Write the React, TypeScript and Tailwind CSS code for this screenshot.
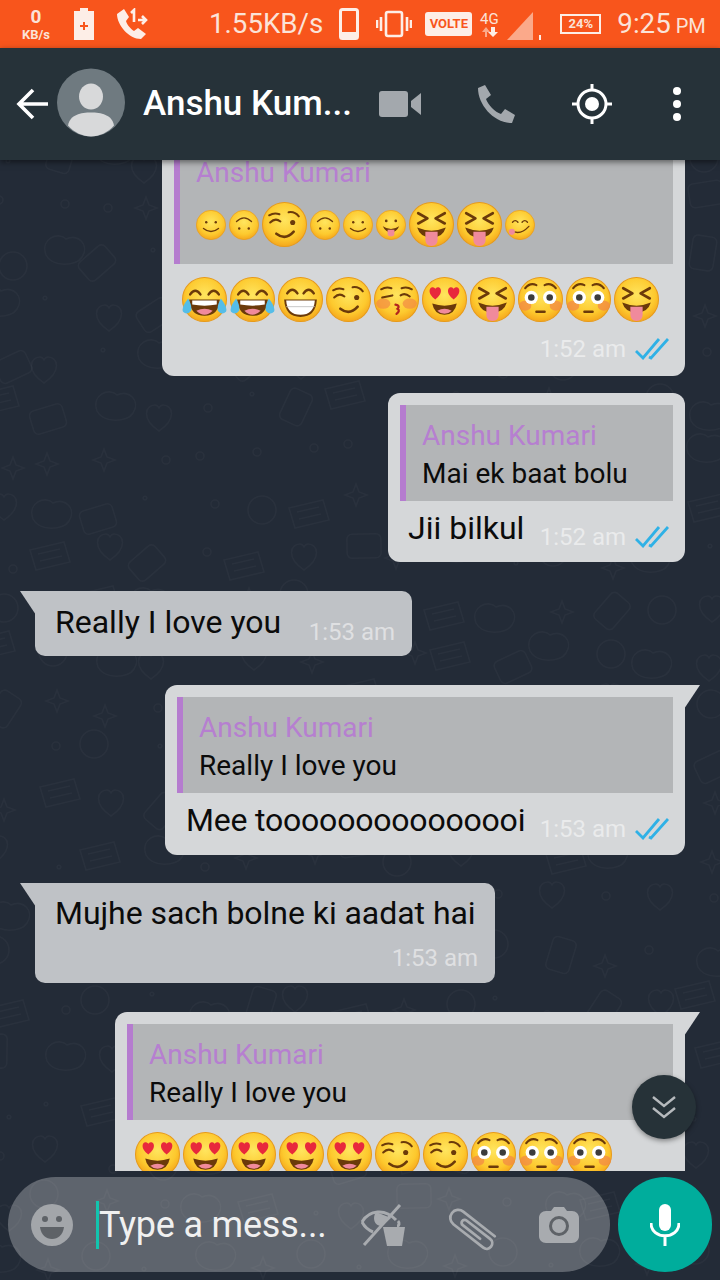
import type { ReactNode } from "react";

type Kind =
  | "smile"
  | "arch"
  | "wink"
  | "tongue"
  | "xd"
  | "yum"
  | "joy"
  | "grin"
  | "kiss"
  | "hearts"
  | "flushed";

const BROWN = "#6b3a0a";

function Heart({ x, y }: { x: number; y: number }) {
  return (
    <path
      transform={`translate(${x} ${y})`}
      d="M0 7C-8 1-6-5-2.500-5-1-5 0-4 0-3 0-4 1-5 2.500-5 6-5 8 1 0 7Z"
      fill="#e8283c"
    />
  );
}

function Face({ kind }: { kind: Kind }) {
  switch (kind) {
    case "smile":
      return (
        <g fill="none" stroke={BROWN} strokeWidth="2" strokeLinecap="round">
          <circle cx="15" cy="18" r="1.800" fill={BROWN} stroke="none" />
          <circle cx="29" cy="18" r="1.800" fill={BROWN} stroke="none" />
          <path d="M11 27Q22 36 33 27" />
        </g>
      );
    case "arch":
      return (
        <g fill="none" stroke={BROWN} strokeWidth="2" strokeLinecap="round">
          <path d="M11 17Q22 6 33 17" />
          <circle cx="15" cy="27" r="1.800" fill={BROWN} stroke="none" />
          <circle cx="29" cy="27" r="1.800" fill={BROWN} stroke="none" />
        </g>
      );
    case "wink":
      return (
        <g fill="none" stroke={BROWN} strokeWidth="2" strokeLinecap="round">
          <path d="M8 20Q13 15 18 19" />
          <path d="M26 10Q32 9 36 14" />
          <path d="M7 13Q12 10 17 12" />
          <circle cx="30" cy="20" r="2.500" fill={BROWN} stroke="none" />
          <path d="M14 31Q23 38 31 29" strokeWidth="2.500" />
        </g>
      );
    case "tongue":
      return (
        <g>
          <circle cx="15" cy="16" r="2" fill={BROWN} />
          <circle cx="29" cy="16" r="2" fill={BROWN} />
          <path d="M10 24Q22 32 34 24Q30 33 22 33Q14 33 10 24Z" fill={BROWN} />
          <path d="M17 29H27V35Q27 39 22 39Q17 39 17 35Z" fill="#f08a9c" />
        </g>
      );
    case "xd":
      return (
        <g>
          <path
            d="M9 11L18 16 9 21M35 11L26 16 35 21"
            fill="none"
            stroke={BROWN}
            strokeWidth="2.600"
            strokeLinecap="round"
            strokeLinejoin="round"
          />
          <path d="M8 25Q22 31 36 25Q33 35 22 35Q11 35 8 25Z" fill={BROWN} />
          <path d="M16 29H28V37Q28 43 22 43Q16 43 16 37Z" fill="#f08a9c" />
        </g>
      );
    case "yum":
      return (
        <g>
          <path
            d="M11 18Q15 13 19 18M25 18Q29 13 33 18"
            fill="none"
            stroke={BROWN}
            strokeWidth="2"
            strokeLinecap="round"
          />
          <path d="M9 30Q22 38 35 24" fill="none" stroke={BROWN} strokeWidth="2" strokeLinecap="round" />
          <circle cx="10" cy="32" r="4.500" fill="#f08a9c" />
        </g>
      );
    case "joy":
      return (
        <g>
          <path
            d="M8 17Q13 10 18 17M26 17Q31 10 36 17"
            fill="none"
            stroke={BROWN}
            strokeWidth="2.400"
            strokeLinecap="round"
          />
          <path d="M7 22H37Q36 38 22 38Q8 38 7 22Z" fill={BROWN} />
          <path d="M10 23H34V27Q22 29 10 27Z" fill="#fff" />
          <path d="M14 33Q22 29 30 33Q26 37 22 37Q18 37 14 33Z" fill="#f08a9c" />
          <path d="M6 21Q-1 30 1 34Q5 38 9 33Q10 28 6 21ZM38 21Q45 30 43 34Q39 38 35 33Q34 28 38 21Z" fill="#55bde8" />
        </g>
      );
    case "grin":
      return (
        <g>
          <path
            d="M9 16Q14 9 19 16M25 16Q30 9 35 16"
            fill="none"
            stroke={BROWN}
            strokeWidth="2.400"
            strokeLinecap="round"
          />
          <path d="M6 22H38Q37 39 22 39Q7 39 6 22Z" fill={BROWN} />
          <path d="M8 23H36Q35 37 22 37Q9 37 8 23Z" fill="#fff" />
          <path d="M8 29H36" stroke="#bbb" strokeWidth="0.800" />
        </g>
      );
    case "kiss":
      return (
        <g>
          <ellipse cx="9" cy="26" rx="7" ry="5" fill="#f28a45" opacity="0.7" />
          <ellipse cx="35" cy="26" rx="7" ry="5" fill="#f28a45" opacity="0.7" />
          <path
            d="M7 12Q12 9 17 11M27 11Q32 9 37 12M8 20L18 18M26 18Q30 15 35 19"
            fill="none"
            stroke={BROWN}
            strokeWidth="2"
            strokeLinecap="round"
          />
          <path d="M21 27Q26 28 23 31Q26 33 22 36" fill="none" stroke="#b3261e" strokeWidth="2.200" strokeLinecap="round" />
        </g>
      );
    case "hearts":
      return (
        <g>
          <Heart x={13} y={15} />
          <Heart x={31} y={15} />
          <path d="M10 26Q22 30 34 26Q32 37 22 37Q12 37 10 26Z" fill={BROWN} />
          <path d="M15 33Q22 29 29 33Q26 36 22 36Q18 36 15 33Z" fill="#f08a9c" />
        </g>
      );
    case "flushed":
      return (
        <g>
          <ellipse cx="7" cy="28" rx="6" ry="5" fill="#f28a45" opacity="0.75" />
          <ellipse cx="37" cy="28" rx="6" ry="5" fill="#f28a45" opacity="0.75" />
          <path d="M7 11Q12 5 18 8M26 8Q32 5 37 11" fill="none" stroke={BROWN} strokeWidth="2" strokeLinecap="round" />
          <circle cx="13" cy="20" r="6.500" fill="#fff" />
          <circle cx="31" cy="20" r="6.500" fill="#fff" />
          <circle cx="13" cy="20" r="3.200" fill="#3c3c3c" />
          <circle cx="31" cy="20" r="3.200" fill="#3c3c3c" />
          <path d="M18 34H26" stroke={BROWN} strokeWidth="2.400" strokeLinecap="round" />
        </g>
      );
  }
}

function Emoji({ kind, small }: { kind: Kind; small?: boolean }) {
  return (
    <svg viewBox="0 0 44 44" className={small ? "h-[30px] w-[30px] shrink-0" : "h-[45px] w-[45px] shrink-0"}>
      <circle cx="22" cy="22" r="21.500" fill="url(#emojiFace)" stroke="#e79a1a" strokeWidth="1" />
      <Face kind={kind} />
    </svg>
  );
}

function Ticks() {
  return (
    <svg viewBox="0 0 34 22" className="h-[22px] w-[34px]" fill="none" stroke="#2fb1e6" strokeWidth="2.800">
      <path d="M1 13L8 20 24 1" />
      <path d="M14 19L16 20 33 1" />
    </svg>
  );
}

function Reply({ children, text }: { children?: ReactNode; text?: string }) {
  return (
    <div className="flex h-[96px] flex-col border-l-[6px] border-[#b57ccf] bg-[#b3b5b7] pl-[16px] pt-[13px]">
      <div className="text-[28px] leading-[36px] text-[#b67fd0]">Anshu Kumari</div>
      {text && <div className="text-[28px] leading-[40px] text-[#0b0b0b]">{text}</div>}
      {children}
    </div>
  );
}

function Time({ value, ticks }: { value: string; ticks?: boolean }) {
  return (
    <div className="flex items-center gap-[9px] text-[24px] leading-[28px] text-white/50">
      <span>{value}</span>
      {ticks && <Ticks />}
    </div>
  );
}

function OutTail() {
  return <div className="absolute right-[-15px] top-0 h-[24px] w-[16px] bg-[#d5d7d9] [clip-path:polygon(0_0,100%_0,0_100%)]" />;
}

function InTail() {
  return <div className="absolute left-[-15px] top-0 h-[24px] w-[16px] bg-[#bfc2c6] [clip-path:polygon(0_0,100%_0,100%_100%)]" />;
}

const REPLY_ROW: { kind: Kind; small: boolean }[] = [
  { kind: "smile", small: true },
  { kind: "arch", small: true },
  { kind: "wink", small: false },
  { kind: "arch", small: true },
  { kind: "smile", small: true },
  { kind: "tongue", small: true },
  { kind: "xd", small: false },
  { kind: "xd", small: false },
  { kind: "yum", small: true },
];

const ROW_ONE: Kind[] = ["joy", "joy", "grin", "wink", "kiss", "hearts", "xd", "flushed", "flushed", "xd"];
const ROW_TWO: Kind[] = ["hearts", "hearts", "hearts", "hearts", "hearts", "wink", "wink", "flushed", "flushed", "flushed"];

// faint hand-drawn wallpaper: jittered small outlines, the odd big blob
function Doodles() {
  const shapes = [];
  for (let r = 0; r < 26; r++) {
    for (let c = 0; c < 15; c++) {
      const seed = (r * 37 + c * 61 + r * c * 13) % 97;
      const x = c * 50 + (seed % 23) - 6;
      const y = r * 50 + ((seed * 7) % 27) - 6;
      const k = seed % 8;
      const key = `${r}-${c}`;
      if (k === 0) shapes.push(<circle key={key} cx={x} cy={y} r="14" />);
      if (k === 1) shapes.push(<rect key={key} x={x - 12} y={y - 17} width="24" height="34" rx="5" transform={`rotate(${seed} ${x} ${y})`} />);
      if (k === 2) shapes.push(<path key={key} d={`M${x} ${y - 11}l3 8 8 3-8 3-3 8-3-8-8-3 8-3z`} />);
      if (k === 3) shapes.push(<circle key={key} cx={x} cy={y} r="4" />);
      if (k === 4) shapes.push(<path key={key} d={`M${x - 18} ${y + 6}c-6-16 12-24 20-16 12-6 24 6 16 18-6 10-30 10-36-2z`} />);
      if (k === 5) shapes.push(<path key={key} d={`M${x - 20} ${y - 8}l34-8 6 20-34 8zM${x - 12} ${y - 4}l22-5M${x - 10} ${y + 3}l22-5`} />);
      if (k === 6) shapes.push(<circle key={key} cx={x} cy={y} r="1.800" />);
      if (k === 7) shapes.push(<path key={key} d={`M${x} ${y + 13}c-18-12-14-26-4-26 2 0 3 1 4 3 1-2 2-3 4-3 10 0 14 14-4 26z`} />);
    }
  }
  return (
    <svg className="absolute inset-0 h-full w-full" fill="none" stroke="#ffffff" strokeOpacity="0.032" strokeWidth="1.600">
      {shapes}
    </svg>
  );
}

function StatusBar() {
  return (
    <div className="flex h-[48px] shrink-0 items-center bg-[#f8551c] text-[#fbe3d8]">
      <div className="ml-[20px] flex w-[32px] flex-col items-center font-bold">
        <span className="text-[19px] leading-[21px]">0</span>
        <span className="text-[13px] leading-[15px]">KB/s</span>
      </div>
      <svg viewBox="0 0 20 32" className="ml-[22px] h-[32px] w-[20px]">
        <path d="M6 0H14V3H20V32H0V3H6Z" fill="#fdeee7" />
        <path d="M9 14H11V17H14V19H11V22H9V19H6V17H9Z" fill="#f8551c" />
      </svg>
      <svg viewBox="0 0 32 32" className="ml-[22px] h-[32px] w-[32px]">
        <path d="M1 6L8 1 13 9 10 13C11 17 15 21 18 23L22 20 30 26 25 31C13 31 1 17 1 6Z" fill="#fdeee7" />
        <path d="M15 5L18 2V14M22 12H30M26 8L30 12 26 16" fill="none" stroke="#fdeee7" strokeWidth="2.600" />
      </svg>
      <span className="ml-[61px] text-[27.700px] leading-[32px]">1.55KB/s</span>
      <svg viewBox="0 0 20 32" className="ml-[16px] h-[32px] w-[20px]">
        <rect x="1.500" y="1.500" width="17" height="29" rx="2" fill="none" stroke="#fdeee7" strokeWidth="3" />
        <rect x="1" y="24" width="18" height="7" rx="2" fill="#fdeee7" />
      </svg>
      <svg viewBox="0 0 36 28" className="ml-[17px] h-[28px] w-[36px]" fill="none" stroke="#fdeee7" strokeWidth="2.600">
        <rect x="10" y="2" width="16" height="24" rx="2" />
        <path d="M5 7V21M1 10V18M31 7V21M35 10V18" />
      </svg>
      <div className="ml-[13px] flex h-[24px] w-[47px] items-center justify-center rounded-[3px] bg-[#fdeee7] text-[13px] font-bold text-[#f8551c]">
        VOLTE
      </div>
      <div className="ml-[6px] flex w-[22px] flex-col items-center">
        <span className="text-[15px] leading-[15px]">4G</span>
        <svg viewBox="0 0 20 10" className="h-[10px] w-[20px]">
          <path d="M6 10V5H3L7 0 11 5H8V10Z" fill="#fba98a" />
          <path d="M12 0H16V5H19L14 10 9 5H12Z" fill="#fdeee7" />
        </svg>
      </div>
      <svg viewBox="0 0 34 30" className="ml-[7px] mt-[6px] h-[30px] w-[34px]">
        <path d="M26 0V28H0Z" fill="#fba98a" />
        <path d="M33 23V28" stroke="#fdeee7" strokeWidth="2" />
      </svg>
      <div className="ml-[19px] flex h-[20px] w-[41px] items-center justify-center border-2 border-[#fdeee7] text-[13px] font-bold">
        24%
      </div>
      <span className="ml-[16px] text-[27.700px] leading-[32px]">9:25</span>
      <span className="ml-[5px] mt-[4px] text-[20px] leading-[24px]">PM</span>
    </div>
  );
}

function Header() {
  return (
    <div className="relative z-10 flex h-[112px] shrink-0 items-center bg-[#263239] shadow-[0_2px_6px_rgba(0,0,0,0.5)]">
      <svg viewBox="0 0 32 32" className="ml-[16px] h-[32px] w-[32px]" fill="none" stroke="#fff" strokeWidth="3.600">
        <path d="M32 16H3M17 2L3 16 17 30" />
      </svg>
      <svg viewBox="0 0 68 68" className="mb-[3px] ml-[9px] h-[69px] w-[68px]">
        <circle cx="34" cy="34" r="34" fill="#6f7a80" />
        <ellipse cx="34" cy="28" rx="12" ry="13" fill="#d8d9da" />
        <path d="M11 57C13 46 24 44 34 44 44 44 55 46 57 57 51 64 42 68 34 68 26 68 17 64 11 57Z" fill="#d8d9da" />
      </svg>
      <span className="ml-[18px] w-[208px] text-[35px] font-medium leading-[42px] text-white whitespace-nowrap">
        Anshu Kum...
      </span>
      <svg viewBox="0 0 42 26" className="ml-[28px] h-[26px] w-[42px]" fill="#a3a8ad">
        <rect width="29" height="26" rx="3" />
        <path d="M32 10L42 2V24L32 16Z" />
      </svg>
      <svg viewBox="0 0 38 38" className="ml-[56px] h-[38px] w-[38px]" fill="#a3a8ad">
        <path d="M1 3L8 0 14 10 9 14C11 20 18 27 24 29L28 24 38 30 35 38C17 38 1 20 1 3Z" />
      </svg>
      <svg viewBox="0 0 40 40" className="ml-[57px] h-[40px] w-[40px]" fill="none" stroke="#fff" strokeWidth="3">
        <circle cx="20" cy="20" r="14" />
        <circle cx="20" cy="20" r="7" fill="#fff" stroke="none" />
        <path d="M20 0V6M20 34V40M0 20H6M34 20H40" />
      </svg>
      <div className="ml-[61px] flex flex-col gap-[5px]">
        <div className="h-[8px] w-[8px] rounded-full bg-white" />
        <div className="h-[8px] w-[8px] rounded-full bg-white" />
        <div className="h-[8px] w-[8px] rounded-full bg-white" />
      </div>
    </div>
  );
}

function Composer() {
  return (
    <div className="flex h-[109px] shrink-0 items-start gap-[8px] px-[8px] pt-[6px]">
      <div className="flex h-[95px] w-[602px] items-center rounded-full bg-white/[0.27]">
        <svg viewBox="0 0 42 42" className="ml-[23px] h-[42px] w-[42px]">
          <circle cx="21" cy="21" r="21" fill="#a3a6aa" />
          <circle cx="14" cy="15" r="3" fill="#5e6267" />
          <circle cx="28" cy="15" r="3" fill="#5e6267" />
          <path d="M9 23H33C32 31 27 35 21 35 15 35 10 31 9 23Z" fill="#5e6267" />
        </svg>
        <div className="ml-[23px] flex items-center">
          <div className="h-[48px] w-[3px] bg-[#12c4ae]" />
          <span className="w-[238px] text-[36px] leading-[48px] tracking-[-0.2px] text-[#f0f0f0] whitespace-nowrap">
            Type a mess...
          </span>
        </div>
        <svg viewBox="0 0 44 42" className="ml-[24px] h-[42px] w-[44px]" fill="none" stroke="#a8abaf" strokeWidth="3">
          <path d="M1 18C8 6 24 4 35 16" />
          <path d="M1 18C3 22 7 26 12 28" />
          <path d="M15 8C11 14 13 22 21 22L30 14" fill="#a8abaf" stroke="none" />
          <path d="M3 41L39 1" />
          <path d="M37 17C39 19 38 22 36 22" />
          <path d="M22 23H44L41 42H26Z" fill="#a8abaf" stroke="none" />
        </svg>
        <svg viewBox="0 0 42 38" className="ml-[39px] h-[38px] w-[42px] overflow-visible" fill="none" stroke="#a8abaf" strokeWidth="2.800" strokeLinecap="round">
          <path
            transform="translate(8 7) rotate(38)"
            d="M48 -8H8A8 8 0 0 0 8 8H46A5.500 5.500 0 0 0 46 -3H16A3 3 0 0 0 16 3H38"
          />
        </svg>
        <svg viewBox="0 0 40 37" className="ml-[53px] h-[37px] w-[40px]">
          <path d="M7 5H12L15 1H25L28 5H33C37 5 40 8 40 12V30C40 34 37 37 33 37H7C3 37 0 34 0 30V12C0 8 3 5 7 5Z" fill="#a8abaf" />
          <circle cx="20" cy="20" r="8.500" fill="none" stroke="#5e6267" strokeWidth="3" />
        </svg>
      </div>
      <div className="flex h-[95px] w-[94px] items-center justify-center rounded-full bg-[#00ad9c]">
        <svg viewBox="0 0 30 42" className="h-[42px] w-[30px]" fill="none" stroke="#fff" strokeWidth="3">
          <rect x="9" y="0" width="12" height="27" rx="6" fill="#fff" stroke="none" />
          <path d="M1 19C1 36 29 36 29 19M15 31V42" />
        </svg>
      </div>
    </div>
  );
}

export default function App() {
  return (
    <div className="relative flex h-[1280px] w-[720px] flex-col overflow-hidden bg-[#232b37] font-['Roboto',sans-serif]">
      {/* shared face gradient */}
      <svg className="absolute h-0 w-0">
        <defs>
          <radialGradient id="emojiFace" cx="50%" cy="40%" r="60%">
            <stop offset="0%" stopColor="#ffe55e" />
            <stop offset="70%" stopColor="#fdc92e" />
            <stop offset="100%" stopColor="#f5a71c" />
          </radialGradient>
        </defs>
      </svg>

      <Doodles />
      <div className="relative flex min-h-0 flex-1 flex-col">
        <StatusBar />
        <Header />

        {/* Messages */}
        <div className="flex h-[1011px] shrink-0 flex-col overflow-hidden px-[35px]">
          <div className="ml-auto mt-[-40px] h-[256px] w-[523px] shrink-0 rounded-[12px] bg-[#d5d7d9] px-[12px]">
            <div className="flex h-[144px] flex-col border-l-[6px] border-[#b57ccf] bg-[#b3b5b7] pl-[16px]">
              <div className="mt-[41px] text-[28px] leading-[24px] text-[#b67fd0]">Anshu Kumari</div>
              <div className="mt-[17px] flex items-center gap-[3px]">
                {REPLY_ROW.map((e, i) => (
                  <Emoji key={i} kind={e.kind} small={e.small} />
                ))}
              </div>
            </div>
            <div className="ml-[8px] mt-[13px] flex gap-[3px]">
              {ROW_ONE.map((k, i) => (
                <Emoji key={i} kind={k} />
              ))}
            </div>
            <div className="mt-[13px] flex justify-end pr-[4px]">
              <Time value="1:52 am" ticks />
            </div>
          </div>

          <div className="ml-auto mt-[17px] h-[169px] w-[297px] shrink-0 rounded-[12px] bg-[#d5d7d9] px-[12px] pt-[12px]">
            <Reply text="Mai ek baat bolu" />
            <div className="mt-[7px] flex items-start justify-between pl-[8px] pr-[4px]">
              <span className="text-[32px] leading-[40px] text-[#0b0b0b]">Jii bilkul</span>
              <div className="mt-[15px]">
                <Time value="1:52 am" ticks />
              </div>
            </div>
          </div>

          <div className="relative mt-[29px] flex h-[65px] w-[377px] shrink-0 items-center justify-between rounded-[0_10px_10px_10px] bg-[#bfc2c6] pl-[20px] pr-[17px]">
            <InTail />
            <span className="mb-[4px] text-[32px] leading-[40px] text-[#0b0b0b]">Really I love you</span>
            <div className="mt-[17px]">
              <Time value="1:53 am" />
            </div>
          </div>

          <div className="relative ml-auto mt-[29px] h-[170px] w-[520px] shrink-0 rounded-[0_0_12px_12px] rounded-tl-[12px] bg-[#d5d7d9] px-[12px] pt-[12px]">
            <OutTail />
            <Reply text="Really I love you" />
            <div className="mt-[7px] flex items-start justify-between pl-[9px] pr-[4px]">
              <span className="text-[32px] leading-[40px] tracking-[-0.2px] text-[#0b0b0b]">Mee tooooooooooooooi</span>
              <div className="mt-[15px]">
                <Time value="1:53 am" ticks />
              </div>
            </div>
          </div>

          <div className="relative mt-[28px] h-[100px] w-[460px] shrink-0 rounded-[0_10px_10px_10px] bg-[#bfc2c6] pl-[20px] pt-[10px]">
            <InTail />
            <div className="text-[32px] leading-[40px] tracking-[-0.05px] text-[#0b0b0b]">Mujhe sach bolne ki aadat hai</div>
            <div className="mt-[5px] flex justify-end pr-[17px] pt-[6px]">
              <Time value="1:53 am" />
            </div>
          </div>

          <div className="relative ml-auto mt-[29px] w-[570px] shrink-0 rounded-tl-[12px] bg-[#d5d7d9] px-[12px] pt-[12px]">
            <OutTail />
            <Reply text="Really I love you" />
            <div className="ml-[8px] mt-[12px] flex gap-[3px]">
              {ROW_TWO.map((k, i) => (
                <Emoji key={i} kind={k} />
              ))}
            </div>
          </div>
        </div>

        <Composer />
      </div>

      {/* Scroll to bottom */}
      <div className="absolute left-[632px] top-[1075px] flex h-[64px] w-[64px] items-center justify-center rounded-full bg-[#263238] shadow-[0_2px_5px_rgba(0,0,0,0.4)]">
        <svg viewBox="0 0 26 24" className="h-[24px] w-[26px]" fill="none" stroke="#b6babd" strokeWidth="2.400">
          <path d="M2 2L13 11 24 2M2 13L13 22 24 13" />
        </svg>
      </div>
    </div>
  );
}
